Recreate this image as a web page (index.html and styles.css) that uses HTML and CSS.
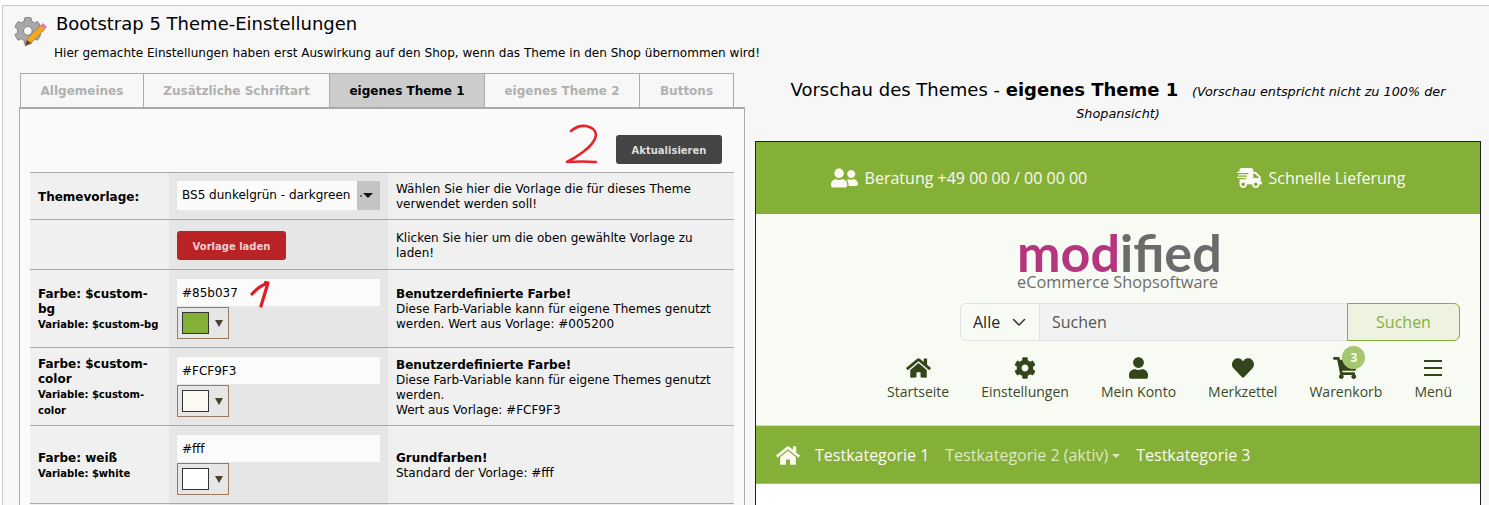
FILE: index.html
```html
<!DOCTYPE html>
<html lang="de">
    <head>
        <meta charset="UTF-8" />
        <title>Bootstrap 5 Theme-Einstellungen</title>
        <link rel="stylesheet" href="styles.css">
    </head>
    <body>
        <section class="page">
            <header class="page-head">
                <svg class="head-icon" viewBox="0 0 34 34" width="34" height="34">
                    <g transform="translate(0 1) scale(0.054)" fill="#a8a8a8" stroke="#6e6e6e" stroke-width="14">
                        <path d="M487.4 315.7l-42.6-24.6c4.3-23.2 4.3-47 0-70.2l42.6-24.6c4.9-2.8 7.1-8.6 5.5-14-11.1-35.6-30-67.8-54.7-94.6-3.8-4.1-10-5.1-14.8-2.3L380.8 110c-17.9-15.4-38.5-27.3-60.8-35.1V25.8c0-5.6-3.9-10.5-9.4-11.7-36.7-8.2-74.3-7.8-109.2 0-5.5 1.2-9.4 6.1-9.4 11.7V75c-22.2 7.9-42.8 19.8-60.8 35.1L88.7 85.5c-4.9-2.8-11-1.9-14.8 2.3-24.7 26.7-43.6 58.9-54.7 94.6-1.7 5.4.6 11.2 5.5 14L67.3 221c-4.3 23.2-4.3 47 0 70.2l-42.6 24.6c-4.9 2.8-7.1 8.6-5.5 14 11.1 35.6 30 67.8 54.7 94.6 3.8 4.1 10 5.1 14.8 2.3l42.6-24.6c17.9 15.4 38.5 27.3 60.8 35.1v49.2c0 5.6 3.9 10.5 9.4 11.7 36.7 8.2 74.3 7.8 109.2 0 5.5-1.2 9.4-6.1 9.4-11.7v-49.2c22.2-7.9 42.8-19.8 60.8-35.1l42.6 24.6c4.9 2.8 11 1.9 14.8-2.3 24.7-26.7 43.6-58.9 54.7-94.6 1.5-5.5-.7-11.3-5.6-14.1zM256 336c-44.1 0-80-35.9-80-80s35.9-80 80-80 80 35.9 80 80-35.9 80-80 80z"/>
                    </g>
                    <polygon points="11,30 13,23 27,9 31,13 17,27" fill="#f5a623" stroke="#b56f10" stroke-width="0.7"/>
                    <polygon points="27,9 29,7 33,11 31,13" fill="#e07ab8"/>
                    <polygon points="11,30 13,24 17,27" fill="#5a4a3a"/>
                </svg>
                <div>
                    <h1>Bootstrap 5 Theme-Einstellungen</h1>
                    <p>Hier gemachte Einstellungen haben erst Auswirkung auf den Shop, wenn das Theme in den Shop übernommen wird!</p>
                </div>
            </header>
            <div class="columns">
                <section class="settings">
                    <nav class="tabs">
                        <a class="tab tab-1">Allgemeines</a>
                        <a class="tab tab-2">Zusätzliche Schriftart</a>
                        <a class="tab tab-3 active">eigenes Theme 1</a>
                        <a class="tab tab-4">eigenes Theme 2</a>
                        <a class="tab tab-5">Buttons</a>
                    </nav>
                    <div class="panel">
                        <div class="panel-top">
                            <button class="btn btn-dark">Aktualisieren</button>
                        </div>
                        <svg class="mark mark-2" viewBox="0 0 42 45" width="42" height="45">
                            <path d="M10 8Q17 2 25 3Q35 5 35 12Q34 20 22 29Q14 35 6 39Q20 38 35 39" fill="none" stroke="#e8232b" stroke-width="2.6" stroke-linecap="round" stroke-linejoin="round"/>
                        </svg>
                        <table class="form">
                            <tr class="row-select">
                                <th>Themevorlage:</th>
                                <td class="field">
                                    <div class="select">
                                        <span class="select-value">BS5 dunkelgrün - darkgreen</span>
                                        <span class="select-arrow"></span>
                                    </div>
                                </td>
                                <td>Wählen Sie hier die Vorlage die für dieses Theme verwendet werden soll!</td>
                            </tr>
                            <tr class="row-load">
                                <th></th>
                                <td class="field"><button class="btn btn-red">Vorlage laden</button></td>
                                <td>Klicken Sie hier um die oben gewählte Vorlage zu laden!</td>
                            </tr>
                            <tr class="row-color">
                                <th>Farbe: $custom-bg<small>Variable: $custom-bg</small></th>
                                <td class="field">
                                    <div class="field-inner">
                                        <input class="text-input" type="text" value="#85b037" />
                                        <svg class="mark mark-1" viewBox="0 0 24 30" width="24" height="30">
                                            <path d="M3 15Q10 7 19 4Q14 3 19 4L12 27" fill="none" stroke="#e01b24" stroke-width="3.2" stroke-linecap="round" stroke-linejoin="round"/>
                                        </svg>
                                        <div class="picker"><span class="swatch swatch-green"></span><span class="picker-arrow"></span></div>
                                    </div>
                                </td>
                                <td><b>Benutzerdefinierte Farbe!</b><br />Diese Farb-Variable kann für eigene Themes genutzt werden. Wert aus Vorlage: #005200</td>
                            </tr>
                            <tr class="row-color">
                                <th>Farbe: $custom-color<small>Variable: $custom-color</small></th>
                                <td class="field">
                                    <div class="field-inner">
                                        <input class="text-input" type="text" value="#FCF9F3" />
                                        <div class="picker"><span class="swatch swatch-cream"></span><span class="picker-arrow"></span></div>
                                    </div>
                                </td>
                                <td><b>Benutzerdefinierte Farbe!</b><br />Diese Farb-Variable kann für eigene Themes genutzt werden.<br />Wert aus Vorlage: #FCF9F3</td>
                            </tr>
                            <tr class="row-color">
                                <th>Farbe: weiß<small>Variable: $white</small></th>
                                <td class="field">
                                    <div class="field-inner">
                                        <input class="text-input" type="text" value="#fff" />
                                        <div class="picker"><span class="swatch swatch-white"></span><span class="picker-arrow"></span></div>
                                    </div>
                                </td>
                                <td><b>Grundfarben!</b><br />Standard der Vorlage: #fff</td>
                            </tr>
                            <tr class="row-color">
                                <th></th>
                                <td class="field"></td>
                                <td></td>
                            </tr>
                        </table>
                    </div>
                </section>
                <section class="preview">
                    <h2>Vorschau des Themes - <b>eigenes Theme 1</b> <em>(Vorschau entspricht nicht zu 100% der Shopansicht)</em></h2>
                    <div class="shop">
                        <div class="shop-top">
                            <span class="top-item">
                                <svg viewBox="0 0 640 512" width="27" height="22"><path d="M192 256c61.9 0 112-50.1 112-112S253.9 32 192 32 80 82.1 80 144s50.1 112 112 112zm76.8 32h-8.3c-20.8 10-43.9 16-68.5 16s-47.6-6-68.5-16h-8.3C51.6 288 0 339.6 0 403.2V432c0 26.5 21.5 48 48 48h288c26.5 0 48-21.5 48-48v-28.8c0-63.6-51.6-115.2-115.2-115.2zM480 256c53 0 96-43 96-96s-43-96-96-96-96 43-96 96 43 96 96 96zm48 32h-3.8c-13.9 4.8-28.6 8-44.2 8s-30.3-3.2-44.2-8H432c-20.4 0-39.2 5.9-55.7 15.4 24.4 26.3 39.7 61.2 39.7 99.8v38.4c0 2.2-.5 4.3-.6 6.4H592c26.5 0 48-21.5 48-48 0-61.9-50.1-112-112-112z"/></svg>
                                Beratung +49 00 00 / 00 00 00
                            </span>
                            <span class="top-item">
                                <svg viewBox="0 0 640 512" width="25" height="20"><path d="M624 352h-16V243.9c0-12.7-5.1-24.9-14.1-33.9L494 110.1c-9-9-21.2-14.1-33.9-14.1H416V48c0-26.5-21.5-48-48-48H112C85.5 0 64 21.5 64 48v48H8c-4.4 0-8 3.6-8 8v16c0 4.4 3.6 8 8 8h272c4.4 0 8 3.6 8 8v16c0 4.4-3.6 8-8 8H40c-4.4 0-8 3.6-8 8v16c0 4.4 3.6 8 8 8h208c4.4 0 8 3.6 8 8v16c0 4.4-3.6 8-8 8H8c-4.4 0-8 3.6-8 8v16c0 4.4 3.6 8 8 8h208c4.4 0 8 3.6 8 8v16c0 4.4-3.6 8-8 8H64v128c0 53 43 96 96 96s96-43 96-96h128c0 53 43 96 96 96s96-43 96-96h48c8.8 0 16-7.2 16-16v-32c0-8.8-7.2-16-16-16zM160 464c-26.5 0-48-21.5-48-48s21.5-48 48-48 48 21.5 48 48-21.5 48-48 48zm320 0c-26.5 0-48-21.5-48-48s21.5-48 48-48 48 21.5 48 48-21.5 48-48 48zm80-208H416V144h44.1l99.9 99.9V256z"/></svg>
                                Schnelle Lieferung
                            </span>
                        </div>
                        <div class="shop-head">
                            <div class="logo">
                                <div class="logo-name"><span class="logo-mod">mod</span>ified</div>
                                <div class="logo-sub">eCommerce Shopsoftware</div>
                            </div>
                            <div class="search">
                                <span class="search-cat">Alle
                                    <svg viewBox="0 0 16 16" width="16" height="16"><path d="M2.5 5.5L8 11l5.5-5.5" fill="none" stroke="#343a40" stroke-width="1.6" stroke-linecap="round" stroke-linejoin="round"/></svg>
                                </span>
                                <span class="search-input">Suchen</span>
                                <span class="search-btn">Suchen</span>
                            </div>
                            <nav class="shop-nav">
                                <a class="nav-item">
                                    <svg viewBox="0 0 576 512" width="25" height="22"><path d="M280.37 148.26L96 300.11V464a16 16 0 0 0 16 16l112.06-.29a16 16 0 0 0 15.92-16V368a16 16 0 0 1 16-16h64a16 16 0 0 1 16 16v95.64a16 16 0 0 0 16 16.05L464 480a16 16 0 0 0 16-16V300L295.67 148.26a12.19 12.19 0 0 0-15.3 0zM571.6 251.47L488 182.56V44.05a12 12 0 0 0-12-12h-56a12 12 0 0 0-12 12v72.61L318.47 43a48 48 0 0 0-61 0L4.34 251.47a12 12 0 0 0-1.6 16.9l25.5 31A12 12 0 0 0 45.15 301l235.22-193.74a12.19 12.19 0 0 1 15.3 0L530.9 301a12 12 0 0 0 16.9-1.6l25.5-31a12 12 0 0 0-1.7-16.93z"/></svg>
                                    Startseite
                                </a>
                                <a class="nav-item">
                                    <svg viewBox="0 0 512 512" width="22" height="22"><path d="M487.4 315.7l-42.6-24.6c4.3-23.2 4.3-47 0-70.2l42.6-24.6c4.9-2.8 7.1-8.6 5.5-14-11.1-35.6-30-67.8-54.7-94.6-3.8-4.1-10-5.1-14.8-2.3L380.8 110c-17.9-15.4-38.5-27.3-60.8-35.1V25.8c0-5.6-3.9-10.5-9.4-11.7-36.7-8.2-74.3-7.8-109.2 0-5.5 1.2-9.4 6.1-9.4 11.7V75c-22.2 7.9-42.8 19.8-60.8 35.1L88.7 85.5c-4.9-2.8-11-1.9-14.8 2.3-24.7 26.7-43.6 58.9-54.7 94.6-1.7 5.4.6 11.2 5.5 14L67.3 221c-4.3 23.2-4.3 47 0 70.2l-42.6 24.6c-4.9 2.8-7.1 8.6-5.5 14 11.1 35.6 30 67.8 54.7 94.6 3.8 4.1 10 5.1 14.8 2.3l42.6-24.6c17.9 15.4 38.5 27.3 60.8 35.1v49.2c0 5.6 3.9 10.5 9.4 11.7 36.7 8.2 74.3 7.8 109.2 0 5.5-1.2 9.4-6.1 9.4-11.7v-49.2c22.2-7.9 42.8-19.8 60.8-35.1l42.6 24.6c4.9 2.8 11 1.9 14.8-2.3 24.7-26.7 43.6-58.9 54.7-94.6 1.5-5.5-.7-11.3-5.6-14.1zM256 336c-44.1 0-80-35.9-80-80s35.9-80 80-80 80 35.9 80 80-35.9 80-80 80z"/></svg>
                                    Einstellungen
                                </a>
                                <a class="nav-item">
                                    <svg viewBox="0 0 448 512" width="19" height="22"><path d="M224 256c70.7 0 128-57.3 128-128S294.7 0 224 0 96 57.3 96 128s57.3 128 128 128zm89.6 32h-16.7c-22.2 10.2-46.9 16-72.9 16s-50.6-5.8-72.9-16h-16.7C60.2 288 0 348.2 0 422.4V464c0 26.5 21.5 48 48 48h352c26.5 0 48-21.5 48-48v-41.6c0-74.2-60.2-134.4-134.4-134.4z"/></svg>
                                    Mein Konto
                                </a>
                                <a class="nav-item">
                                    <svg viewBox="0 0 512 512" width="22" height="22"><path d="M462.3 62.6C407.5 15.9 326 24.3 275.7 76.2L256 96.5l-19.7-20.3C186.1 24.3 104.5 15.9 49.7 62.6c-62.8 53.6-66.1 149.8-9.9 207.9l193.5 199.8c12.5 12.9 32.8 12.9 45.3 0l193.5-199.8c56.3-58.1 53-154.3-9.8-207.9z"/></svg>
                                    Merkzettel
                                </a>
                                <a class="nav-item nav-cart">
                                    <svg viewBox="0 0 576 512" width="25" height="22"><path d="M528.12 301.319l47.273-208C578.806 78.301 567.391 64 551.99 64H159.208l-9.166-44.81C147.758 8.021 137.93 0 126.529 0H24C10.745 0 0 10.745 0 24v16c0 13.255 10.745 24 24 24h69.883l70.248 343.435C147.325 417.1 136 435.222 136 456c0 30.928 25.072 56 56 56s56-25.072 56-56c0-15.674-6.447-29.835-16.824-40h209.647C430.447 426.165 424 440.326 424 456c0 30.928 25.072 56 56 56s56-25.072 56-56c0-22.172-12.888-41.332-31.579-50.405l5.517-24.276c3.413-15.018-8.002-29.319-23.403-29.319H218.117l-6.545-32h293.145c11.206 0 20.92-7.754 23.403-18.681z"/></svg>
                                    Warenkorb
                                    <span class="badge">3</span>
                                </a>
                                <a class="nav-item">
                                    <svg viewBox="0 0 18 22" width="18" height="22"><path d="M0 4h18M0 11h18M0 18h18" stroke="#33451a" stroke-width="2" fill="none"/></svg>
                                    Menü
                                </a>
                            </nav>
                        </div>
                        <nav class="shop-cats">
                            <svg viewBox="0 0 576 512" width="24" height="21"><path d="M280.37 148.26L96 300.11V464a16 16 0 0 0 16 16l112.06-.29a16 16 0 0 0 15.92-16V368a16 16 0 0 1 16-16h64a16 16 0 0 1 16 16v95.64a16 16 0 0 0 16 16.05L464 480a16 16 0 0 0 16-16V300L295.67 148.26a12.19 12.19 0 0 0-15.3 0zM571.6 251.47L488 182.56V44.05a12 12 0 0 0-12-12h-56a12 12 0 0 0-12 12v72.61L318.47 43a48 48 0 0 0-61 0L4.34 251.47a12 12 0 0 0-1.6 16.9l25.5 31A12 12 0 0 0 45.15 301l235.22-193.74a12.19 12.19 0 0 1 15.3 0L530.9 301a12 12 0 0 0 16.9-1.6l25.5-31a12 12 0 0 0-1.7-16.93z"/></svg>
                            <a>Testkategorie 1</a>
                            <a class="cat-active">Testkategorie 2 (aktiv)<span class="caret"></span></a>
                            <a>Testkategorie 3</a>
                        </nav>
                        <div class="shop-body"></div>
                    </div>
                </section>
            </div>
        </section>
    </body>
</html>
```

FILE: styles.css
```css
* {
    padding: 0;
    margin: 0;
    box-sizing: border-box;
}
html,
body {
    height: 505px;
    overflow: hidden;
    background-color: #fff;
}
body {
    font-family: "DejaVu Sans", Verdana, sans-serif;
    font-size: 12px;
    line-height: 15px;
    color: #000;
}

/* page */
.page {
    margin: 5px 0 0 2px;
    height: 500px;
    border-top: 1px solid #c8c8c8;
    border-left: 1px solid #c8c8c8;
    background-color: #f7f7f7;
    overflow: hidden;
}
.page-head {
    display: flex;
    padding: 8px 0 0 11px;
    height: 67px;
}
.head-icon {
    margin: 2px 7px 0 0;
    flex: none;
}
.page-head h1 {
    font-size: 18px;
    line-height: 20px;
    font-weight: 400;
    margin-left: 1px;
}
.page-head p {
    margin: 12px 0 0 -1px;
    font-size: 12.05px;
}
.columns {
    display: flex;
    align-items: flex-start;
}

/* left side */
.settings {
    width: 752px;
    flex: none;
    padding-left: 16px;
}
.tabs {
    display: flex;
    height: 34px;
    margin-left: 1px;
    width: 714px;
    border-top: 1px solid #aaa;
    border-left: 1px solid #aaa;
    border-right: 1px solid #aaa;
}
.tab {
    display: flex;
    align-items: center;
    justify-content: center;
    padding-top: 1px;
    font-weight: 700;
    font-size: 12px;
    color: #b0b0b0;
    border-right: 1px solid #aaa;
}
.tab:last-child {
    border-right: 0;
}
.tab-1 { width: 123px; }
.tab-2 { width: 186px; }
.tab-3 { width: 155px; }
.tab-4 { width: 155px; }
.tab-5 { flex: 1; }
.tab.active {
    background-color: #ccc;
    color: #000;
}
.panel {
    position: relative;
    width: 726px;
    height: 420px;
    padding: 0 10px;
    background-color: #fafafa;
    border-top: 2px solid #aaa;
    border-left: 1px solid #aaa;
    border-right: 1px solid #aaa;
}
.panel-top {
    display: flex;
    justify-content: flex-end;
    height: 63px;
    padding: 26px 12px 0 0;
}
.btn {
    border: 0;
    border-radius: 3px;
    padding-top: 1px;
    font-family: "DejaVu Sans", Verdana, sans-serif;
    font-size: 10px;
    font-weight: 700;
    height: 29px;
    color: #ddd;
}
.btn-dark {
    width: 106px;
    background-color: #444;
}
.btn-red {
    width: 109px;
    margin-top: 2px;
    background-color: #b92326;
    color: #eccfcf;
}
.mark {
    position: absolute;
}
.mark-2 {
    left: 541px;
    top: 14px;
}
.mark-1 {
    left: 72px;
    top: 1px;
}
.form {
    width: 704px;
    border-collapse: collapse;
    table-layout: fixed;
}
.form tr {
    border-top: 1px solid #aaa;
}
.form th {
    width: 139px;
    padding: 3px 8px 0;
    background-color: #f0f0f0;
    text-align: left;
    font-weight: 700;
    font-size: 12px;
}
.form th small {
    display: block;
    font-size: 10px;
    line-height: 16px;
}
.form td {
    padding: 2px 8px 0;
    background-color: #f0f0f0;
    vertical-align: middle;
}
.form td.field {
    width: 219px;
    padding-top: 0;
    background-color: #e6e6e6;
}
.row-select { height: 47px; }
.row-load { height: 50px; }
.row-color { height: 78px; }
.field-inner {
    position: relative;
}
.select {
    display: flex;
    height: 29px;
    width: 203px;
    margin-bottom: 2px;
    background-color: #fbfbfb;
}
.select-value {
    flex: 1;
    padding: 7px 0 0 5px;
    white-space: nowrap;
}
.select-arrow {
    position: relative;
    width: 23px;
    flex: none;
    background-color: #c4c4c4;
}
.select-arrow::before {
    content: "";
    position: absolute;
    left: 3px;
    top: 14px;
    width: 2px;
    height: 2px;
    background-color: #666;
}
.select-arrow::after {
    content: "";
    position: absolute;
    left: 6px;
    top: 12px;
    border-left: 5px solid transparent;
    border-right: 5px solid transparent;
    border-top: 5px solid #111;
}
.text-input {
    display: block;
    width: 203px;
    height: 28px;
    padding: 0 5px;
    border: 0;
    border-top: 1px solid #e2e2e2;
    background-color: #fbfbfb;
    font-family: "DejaVu Sans", Verdana, sans-serif;
    font-size: 12px;
    color: #000;
}
.picker {
    display: flex;
    align-items: center;
    width: 52px;
    height: 32px;
    margin-top: 1px;
    padding-left: 4px;
    border: 1px solid #9a7b5f;
}
.swatch {
    width: 27px;
    height: 22px;
    border: 1px solid #333;
}
.swatch-green { background-color: #85b037; }
.swatch-cream { background-color: #fcf9f3; }
.swatch-white { background-color: #fff; }
.picker-arrow {
    margin-left: 6px;
    border-left: 4px solid transparent;
    border-right: 4px solid transparent;
    border-top: 7px solid #4a4030;
}

/* right side */
.preview {
    width: 726px;
    flex: none;
}
.preview h2 {
    height: 68px;
    padding: 6px 20px 0;
    font-size: 18px;
    line-height: 22px;
    font-weight: 400;
    text-align: center;
}
.preview h2 em {
    font-size: 12.8px;
    line-height: 1;
    margin-left: 8px;
}
.shop {
    height: 400px;
    border: 1px solid #222;
    background-color: #fff;
    font-family: "Open Sans", sans-serif;
    font-size: 14px;
    line-height: 21px;
}
.shop-top {
    display: flex;
    justify-content: space-around;
    align-items: center;
    height: 72px;
    background-color: #85b037;
    color: #fcf9f3;
    font-size: 16px;
}
.top-item {
    display: flex;
    align-items: center;
    gap: 7px;
}
.top-item svg,
.shop-cats svg {
    fill: #fcf9f3;
}
.shop-head {
    display: flex;
    flex-direction: column;
    height: 212px;
    background-color: #f8fbf3;
    border-bottom: 1px solid #d8d8d8;
}
.logo {
    align-self: center;
    padding-top: 18px;
    width: 202px;
}
.logo-name {
    font-family: Lato, sans-serif;
    font-weight: 700;
    font-size: 52px;
    line-height: 41px;
    color: #6b6b6b;
}
.logo-mod {
    color: #b5357f;
}
.logo-sub {
    font-size: 16.3px;
    line-height: 18px;
    color: #6d6d6d;
    white-space: nowrap;
}
.search {
    display: flex;
    align-self: flex-end;
    width: 500px;
    height: 38px;
    margin: 12px 20px 0 0;
    font-size: 16px;
    line-height: 36px;
    border: 1px solid #dee2e6;
    border-radius: 6px;
}
.search-cat {
    display: flex;
    align-items: center;
    gap: 11px;
    width: 79px;
    padding-left: 12px;
    background-color: #f8fbf3;
    border-right: 1px solid #dee2e6;
    border-radius: 6px 0 0 6px;
    color: #212529;
}
.search-input {
    flex: 1;
    padding-left: 12px;
    background-color: #f1f3f3;
    color: #555;
}
.search-btn {
    width: 113px;
    margin: -1px -1px -1px 0;
    text-align: center;
    background-color: #eef2e0;
    border: 1px solid #85b037;
    border-radius: 0 6px 6px 0;
    color: #85b037;
}
.shop-nav {
    display: flex;
    justify-content: flex-end;
    gap: 32px;
    margin: 16px 28px 0 0;
    color: #3b4a2a;
}
.nav-item {
    position: relative;
    display: flex;
    flex-direction: column;
    align-items: center;
    gap: 2px;
}
.nav-item svg {
    fill: #33451a;
}
.badge {
    position: absolute;
    left: 33px;
    top: -11px;
    width: 23px;
    height: 23px;
    border-radius: 50%;
    background-color: #a5c66f;
    color: #f8fbf3;
    font-size: 12px;
    font-weight: 700;
    line-height: 23px;
    text-align: center;
}
.shop-cats {
    display: flex;
    align-items: center;
    height: 58px;
    gap: 16px;
    padding: 1px 0 0 20px;
    background-color: #85b037;
    border-bottom: 1px solid #a5c66f;
    color: #fcf9f3;
    font-size: 16px;
}
.shop-cats svg {
    margin-right: -1px;
}
.cat-active {
    color: #dde8c2;
}
.caret {
    display: inline-block;
    margin-left: 4px;
    vertical-align: 3px;
    border-left: 4px solid transparent;
    border-right: 4px solid transparent;
    border-top: 4px solid #dde8c2;
}
.shop-body {
    height: 40px;
    background-color: #fff;
}
```
